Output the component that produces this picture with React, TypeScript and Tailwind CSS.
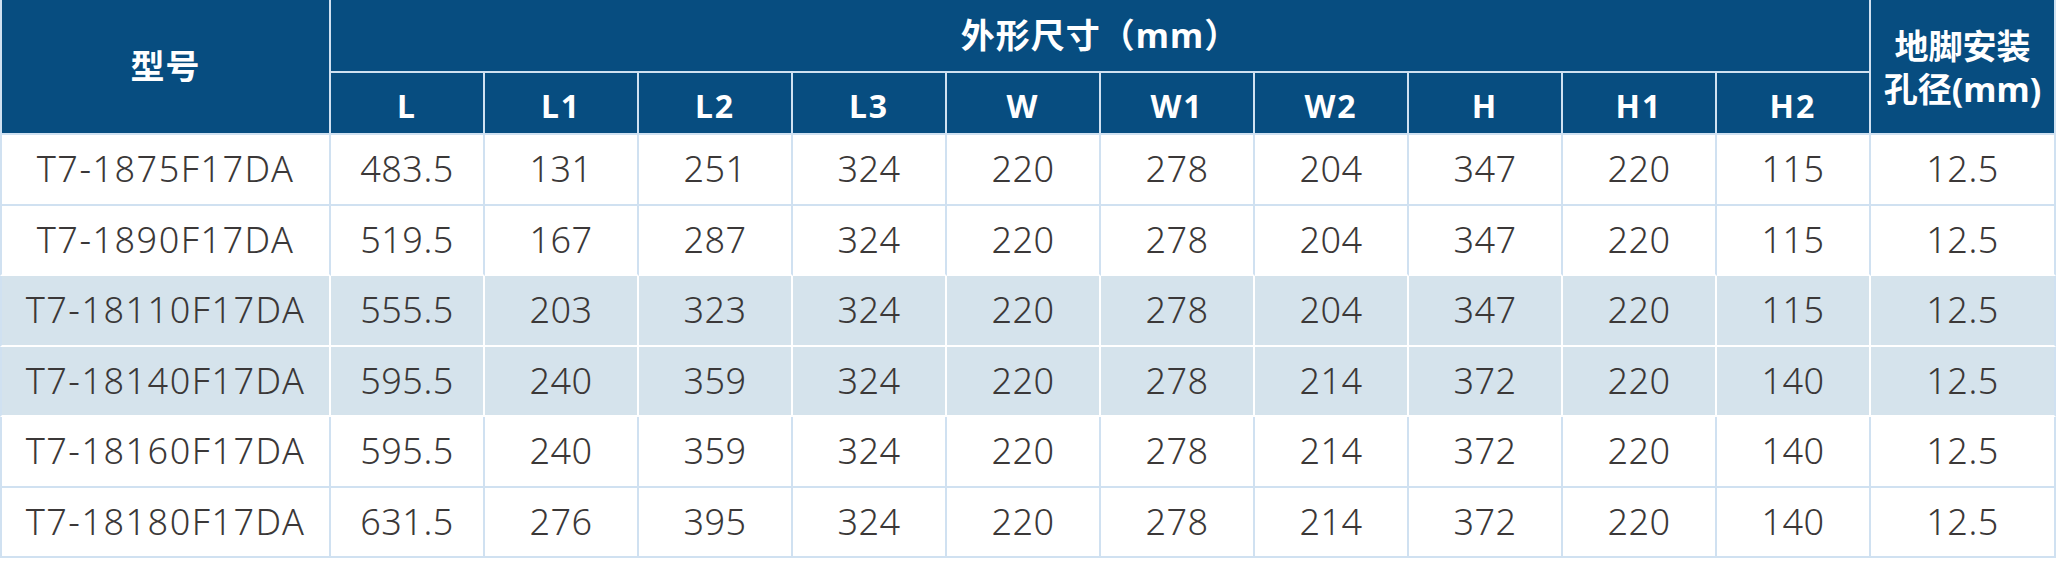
const rows = [
  { model: "T7-1875F17DA", vals: ["483.5", "131", "251", "324", "220", "278", "204", "347", "220", "115", "12.5"] },
  { model: "T7-1890F17DA", vals: ["519.5", "167", "287", "324", "220", "278", "204", "347", "220", "115", "12.5"] },
  { model: "T7-18110F17DA", vals: ["555.5", "203", "323", "324", "220", "278", "204", "347", "220", "115", "12.5"] },
  { model: "T7-18140F17DA", vals: ["595.5", "240", "359", "324", "220", "278", "214", "372", "220", "140", "12.5"] },
  { model: "T7-18160F17DA", vals: ["595.5", "240", "359", "324", "220", "278", "214", "372", "220", "140", "12.5"] },
  { model: "T7-18180F17DA", vals: ["631.5", "276", "395", "324", "220", "278", "214", "372", "220", "140", "12.5"] },
];

const dims = ["L", "L1", "L2", "L3", "W", "W1", "W2", "H", "H1", "H2"];

// rows 3 and 4 are shaded, with white grid lines
const striped = [false, false, true, true, false, false];

const App = () => {
  return (
    <div className="w-[2057px] h-[561px] bg-white">
      <table
        className="w-[2056px] table-fixed border-separate border-spacing-0 text-center"
        style={{ fontFamily: '"Noto Sans", "Noto Sans CJK SC", sans-serif' }}
      >
        <colgroup>
          <col className="w-[331px]" />
          {dims.map((d) => (
            <col key={d} className="w-[154px]" />
          ))}
          <col className="w-[185px]" />
        </colgroup>
        <thead>
          <tr className="h-[73px]">
            <th
              rowSpan={2}
              className="bg-[#074d80] text-white text-[34px] font-bold border-l-2 border-r-2 border-b-2 border-[#d0e1f1] tracking-[1px]"
            >
              型号
            </th>
            <th
              colSpan={10}
              className="bg-[#074d80] text-white text-[34px] font-bold border-r-2 border-b-2 border-[#d0e1f1] tracking-[1px]"
            >
              外形尺寸（mm）
            </th>
            <th
              rowSpan={2}
              className="bg-[#074d80] text-white text-[34px] font-bold leading-[43px] border-r-2 border-b-2 border-[#d0e1f1] pt-[2px]"
            >
              地脚安装
              <br />
              孔径(mm)
            </th>
          </tr>
          <tr className="h-[62px]">
            {dims.map((d) => (
              <th
                key={d}
                className="bg-[#074d80] text-white text-[32px] font-bold tracking-[2px] border-r-2 border-b-2 border-[#d0e1f1] pt-[6px]"
              >
                {d}
              </th>
            ))}
          </tr>
        </thead>
        <tbody className="text-[36px] font-light text-[#3b3838]">
          {rows.map((r, i) => {
            const shaded = striped[i];
            const nextShaded = striped[i + 1] ?? false;
            const bg = shaded ? "bg-[#d5e3ec]" : "bg-white";
            const right = shaded ? "border-r-white" : "border-r-[#d0e1f1]";
            const bottom = shaded || nextShaded ? "border-b-white" : "border-b-[#d0e1f1]";
            return (
              <tr key={r.model} className="h-[70.5px]">
                <td className={`${bg} border-l-2 border-r-2 border-b-2 border-l-[#d0e1f1] ${right} ${bottom} tracking-[1.5px]`}>
                  {r.model}
                </td>
                {r.vals.map((v, j) => (
                  <td
                    key={j}
                    className={`${bg} border-r-2 border-b-2 ${j === r.vals.length - 1 ? "border-r-[#d0e1f1]" : right} ${bottom} tracking-[0.5px]`}
                  >
                    {v}
                  </td>
                ))}
              </tr>
            );
          })}
        </tbody>
      </table>
    </div>
  );
};

export default App;
